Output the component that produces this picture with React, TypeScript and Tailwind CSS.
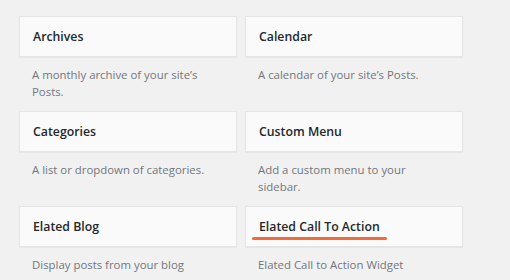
import React from 'react';

interface Widget {
  title: string;
  description: string;
  highlight?: boolean;
}

const widgets: Widget[] = [
  { title: 'Archives', description: 'A monthly archive of your site\u2019s Posts.' },
  { title: 'Calendar', description: 'A calendar of your site\u2019s Posts.' },
  { title: 'Categories', description: 'A list or dropdown of categories.' },
  { title: 'Custom Menu', description: 'Add a custom menu to your sidebar.' },
  { title: 'Elated Blog', description: 'Display posts from your blog' },
  { title: 'Elated Call To Action', description: 'Elated Call to Action Widget', highlight: true },
];

const WidgetItem: React.FC<{ widget: Widget }> = ({ widget }) => (
  <div className="h-[95px]">
    {/* Widget title bar */}
    <div className="h-[41px] flex items-center px-[13px] bg-[#fafafa] border border-[#e5e5e5] shadow-[0_1px_1px_rgba(0,0,0,0.04)]">
      <h3 className="relative text-[12.3px] leading-[18px] font-semibold text-[#23282d]">
        {widget.title}
        {widget.highlight && (
          <span className="absolute left-[-7px] right-[-7px] top-[19px] h-[3px] rounded-full bg-[#f26b3a]"></span>
        )}
      </h3>
    </div>
    {/* Description */}
    <p className="mt-[9px] pl-[13px] pr-[20px] text-[11.4px] leading-[17px] text-[#72777c]">
      {widget.description}
    </p>
  </div>
);

const App: React.FC = () => {
  return (
    <div
      className="w-[510px] h-[280px] overflow-hidden bg-[#f1f1f1] pl-[19px] pt-[16px]"
      style={{ fontFamily: '"Open Sans", "Noto Sans", sans-serif' }}
    >
      <div className="grid grid-cols-[218px_218px] gap-x-[8px]">
        {widgets.map((w) => (
          <WidgetItem key={w.title} widget={w} />
        ))}
      </div>
    </div>
  );
};

export default App;
